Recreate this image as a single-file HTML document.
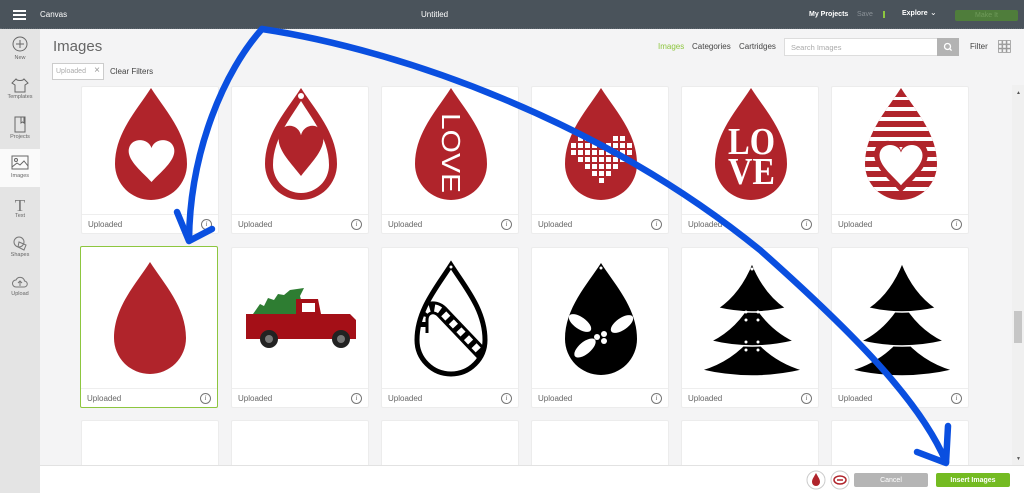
<!DOCTYPE html>
<html><head><meta charset="utf-8"><style>
*{margin:0;padding:0;box-sizing:border-box}
body{width:1024px;height:493px;overflow:hidden;background:#f4f4f5;font-family:"Liberation Sans",sans-serif;position:relative}
.abs{position:absolute}
#top{left:0;top:0;width:1024px;height:29px;background:#4a535b;border-bottom:1px dotted #5f6870}
#top span{position:absolute;color:#fff;font-size:8px;top:10px}
#side{left:0;top:29px;width:40px;height:464px;background:#e4e4e4}
.si{position:absolute;left:0;width:40px;text-align:center;font-size:5.5px;color:#666}
.card{position:absolute;width:138px;background:#fff;border:1px solid #ececec;border-radius:2px;overflow:hidden}
.card svg{display:block}
.ft{position:absolute;left:0;bottom:0;width:100%;height:19px;border-top:1px solid #eee}
.ft span{position:absolute;left:6px;top:5px;font-size:8px;color:#666}
.ft i{position:absolute;right:6px;top:4px;width:11px;height:11px;border:1px solid #777;border-radius:50%;font-size:7px;color:#666;text-align:center;line-height:9px;font-style:italic;font-family:"Liberation Serif",serif}
.btn{position:absolute;top:473px;width:74px;height:14px;border-radius:2px;color:#fff;font-size:7px;display:flex;align-items:center;justify-content:center}
</style></head><body>
<svg width="0" height="0" style="position:absolute"><defs>
<symbol id="drop" viewBox="0 0 72 112"><path d="M36 0C22 22 0 45 0 76A36 36 0 0 0 72 76C72 45 50 22 36 0Z"/></symbol>
<path id="heart" d="M50 22C44 2 12 0 6 22C0 45 30 68 50 90C70 68 100 45 94 22C88 0 56 2 50 22Z"/>
<clipPath id="dc"><path d="M69 1C55 23 33 46 33 77A36 36 0 0 0 105 77C105 46 83 23 69 1Z"/></clipPath>
<clipPath id="cc"><path d="M69 17C55 39 35 62 35 92A34 34 0 0 0 103 92C103 62 83 39 69 17Z"/></clipPath>
</defs></svg>

<div id="top" class="abs">
  <div class="abs" style="left:13px;top:10px;width:13px;height:2px;background:#fff;box-shadow:0 4px 0 #fff,0 8px 0 #fff"></div>
  <span style="left:40px">Canvas</span>
  <span style="left:421px">Untitled</span>
  <span style="left:809px;font-weight:bold;font-size:7px;top:11px">My Projects</span>
  <span style="left:857px;color:#8a9197;font-size:7px;top:11px">Save</span>
  <div class="abs" style="left:883px;top:11px;width:2px;height:7px;background:#8dc63f"></div>
  <span style="left:902px;font-weight:bold;font-size:7px;top:10px">Explore</span>
  <span style="left:930px;font-size:8px;top:8px">&#8964;</span>
  <div class="abs" style="left:955px;top:10px;width:63px;height:11px;background:#4f7d3b;border-radius:2px;color:#6f9a5a;font-size:7px;text-align:center;line-height:11px">Make It</div>
</div>

<div id="side" class="abs">
  <svg class="abs" style="left:12px;top:7px" width="16" height="16"><circle cx="8" cy="8" r="7" fill="none" stroke="#666"/><path d="M8 4v8M4 8h8" stroke="#666"/></svg>
  <div class="si" style="top:26px">New</div>
  <svg class="abs" style="left:11px;top:48px" width="18" height="16"><path d="M5 2L1 6l3 2v7h10V8l3-2-4-4c-1 2-7 2-8 0Z" fill="none" stroke="#666"/></svg>
  <div class="si" style="top:65px">Templates</div>
  <svg class="abs" style="left:13px;top:87px" width="14" height="17"><rect x="2" y="1" width="10" height="15" fill="none" stroke="#666"/><path d="M8 1v6l1.5-1 1.5 1V1" fill="none" stroke="#666"/></svg>
  <div class="si" style="top:105px">Projects</div>
  <div class="abs" style="left:0;top:120px;width:40px;height:38px;background:#fafafa"></div>
  <svg class="abs" style="left:11px;top:126px" width="18" height="15"><rect x="1" y="1" width="16" height="13" fill="none" stroke="#666"/><circle cx="5" cy="5" r="1.5" fill="none" stroke="#666"/><path d="M1 12l5-4 3 2 4-4 4 5" fill="none" stroke="#666"/></svg>
  <div class="si" style="top:144px">Images</div>
  <div class="si" style="top:167px;font-size:17px;font-family:'Liberation Serif',serif;color:#777">T</div>
  <div class="si" style="top:184px">Text</div>
  <svg class="abs" style="left:12px;top:206px" width="16" height="16"><circle cx="7" cy="7" r="5" fill="none" stroke="#777"/><path d="M7 7l7 3-2 5-6-3z" fill="none" stroke="#777"/></svg>
  <div class="si" style="top:223px">Shapes</div>
  <svg class="abs" style="left:12px;top:246px" width="16" height="14"><path d="M4 12a3.5 3.5 0 0 1 0-7 4.5 4.5 0 0 1 8.5 1A3 3 0 0 1 12 12Z" fill="none" stroke="#777"/><path d="M8 11V6M6 8l2-2 2 2" fill="none" stroke="#777"/></svg>
  <div class="si" style="top:262px">Upload</div>
</div>

<div class="abs" style="left:53px;top:38px;font-size:15px;color:#666">Images</div>
<div class="abs" style="left:52px;top:63px;width:52px;height:17px;border:1px solid #ccc;background:#fff;font-size:7px;color:#aaa;padding:4px 0 0 3px">Uploaded <span style="font-size:10px;position:absolute;right:3px;top:1px;color:#999">&#215;</span></div>
<div class="abs" style="left:110px;top:67px;font-size:8px;color:#444">Clear Filters</div>

<div class="abs" style="left:658px;top:42px;font-size:8px;color:#8dc63f">Images</div>
<div class="abs" style="left:692px;top:42px;font-size:8px;color:#444">Categories</div>
<div class="abs" style="left:739px;top:42px;font-size:8px;color:#444">Cartridges</div>
<div class="abs" style="left:784px;top:38px;width:154px;height:18px;background:#fff;border:1px solid #ddd;font-size:7.5px;color:#aaa;padding:4px 0 0 6px">Search Images</div>
<div class="abs" style="left:937px;top:38px;width:22px;height:18px;background:#b3b3b3"><svg width="22" height="18"><circle cx="10.5" cy="8.5" r="3" fill="none" stroke="#fff" stroke-width="1.3"/><path d="M12.6 10.6l2 2" stroke="#fff" stroke-width="1.3"/></svg></div>
<div class="abs" style="left:970px;top:42px;font-size:8px;color:#444">Filter</div>
<svg class="abs" style="left:998px;top:40px" width="13" height="13"><g fill="none" stroke="#999" stroke-width=".8"><rect x=".5" y=".5" width="3.5" height="3.5"/><rect x="4.7" y=".5" width="3.5" height="3.5"/><rect x="8.9" y=".5" width="3.5" height="3.5"/><rect x=".5" y="4.7" width="3.5" height="3.5"/><rect x="4.7" y="4.7" width="3.5" height="3.5"/><rect x="8.9" y="4.7" width="3.5" height="3.5"/><rect x=".5" y="8.9" width="3.5" height="3.5"/><rect x="4.7" y="8.9" width="3.5" height="3.5"/><rect x="8.9" y="8.9" width="3.5" height="3.5"/></g></svg>

<div class="abs" style="left:1012px;top:85px;width:12px;height:380px;background:#f0f0f0"></div>
<div class="abs" style="left:1016px;top:90px;font-size:5px;color:#555">&#9650;</div>
<div class="abs" style="left:1014px;top:311px;width:8px;height:32px;background:#c6c6c6"></div>
<div class="abs" style="left:1016px;top:456px;font-size:5px;color:#555">&#9660;</div>

<!-- ROW 1 -->
<div class="card" style="left:81px;top:86px;height:148px"><svg width="138" height="128" fill="#b0242b">
<use href="#drop" x="33" y="1" width="72" height="112"/><use href="#heart" transform="translate(44,50) scale(.51,.5)" fill="#fff"/></svg>
<div class="ft"><span>Uploaded</span><i>i</i></div></div>

<div class="card" style="left:231px;top:86px;height:148px"><svg width="138" height="128" fill="#b0242b">
<use href="#drop" x="33" y="1" width="72" height="112"/>
<path d="M69 14C58 32 41 52 41 78A28 28 0 0 0 97 78C97 52 80 32 69 14Z" fill="#fff"/>
<use href="#heart" transform="translate(44,35) scale(.5,.6)"/>
<circle cx="69" cy="9" r="3" fill="#fff"/></svg>
<div class="ft"><span>Uploaded</span><i>i</i></div></div>

<div class="card" style="left:381px;top:86px;height:148px"><svg width="138" height="128" fill="#b0242b">
<use href="#drop" x="33" y="1" width="72" height="112"/>
<text transform="translate(60,26) rotate(90)" font-family="Liberation Sans" font-size="26" fill="#fff" textLength="80" lengthAdjust="spacingAndGlyphs">LOVE</text></svg>
<div class="ft"><span>Uploaded</span><i>i</i></div></div>

<div class="card" style="left:531px;top:86px;height:148px"><svg width="138" height="128" fill="#b0242b">
<use href="#drop" x="33" y="1" width="72" height="112"/>
<g fill="#fff">
<rect x="46" y="49" width="5" height="5"/><rect x="53" y="49" width="5" height="5"/><rect x="81" y="49" width="5" height="5"/><rect x="88" y="49" width="5" height="5"/>
<rect x="39" y="56" width="5" height="5"/><rect x="46" y="56" width="5" height="5"/><rect x="53" y="56" width="5" height="5"/><rect x="60" y="56" width="5" height="5"/><rect x="74" y="56" width="5" height="5"/><rect x="81" y="56" width="5" height="5"/><rect x="88" y="56" width="5" height="5"/><rect x="95" y="56" width="5" height="5"/>
<rect x="39" y="63" width="5" height="5"/><rect x="46" y="63" width="5" height="5"/><rect x="53" y="63" width="5" height="5"/><rect x="60" y="63" width="5" height="5"/><rect x="67" y="63" width="5" height="5"/><rect x="74" y="63" width="5" height="5"/><rect x="81" y="63" width="5" height="5"/><rect x="88" y="63" width="5" height="5"/><rect x="95" y="63" width="5" height="5"/>
<rect x="46" y="70" width="5" height="5"/><rect x="53" y="70" width="5" height="5"/><rect x="60" y="70" width="5" height="5"/><rect x="67" y="70" width="5" height="5"/><rect x="74" y="70" width="5" height="5"/><rect x="81" y="70" width="5" height="5"/><rect x="88" y="70" width="5" height="5"/>
<rect x="53" y="77" width="5" height="5"/><rect x="60" y="77" width="5" height="5"/><rect x="67" y="77" width="5" height="5"/><rect x="74" y="77" width="5" height="5"/><rect x="81" y="77" width="5" height="5"/>
<rect x="60" y="84" width="5" height="5"/><rect x="67" y="84" width="5" height="5"/><rect x="74" y="84" width="5" height="5"/>
<rect x="67" y="91" width="5" height="5"/></g></svg>
<div class="ft"><span>Uploaded</span><i>i</i></div></div>

<div class="card" style="left:681px;top:86px;height:148px"><svg width="138" height="128" fill="#b0242b">
<use href="#drop" x="33" y="1" width="72" height="112"/>
<g fill="#fff" font-family="Liberation Serif" font-weight="bold" font-size="38">
<text x="46" y="67" textLength="47" lengthAdjust="spacingAndGlyphs">LO</text>
<text x="46" y="97" textLength="47" lengthAdjust="spacingAndGlyphs">VE</text></g></svg>
<div class="ft"><span>Uploaded</span><i>i</i></div></div>

<div class="card" style="left:831px;top:86px;height:148px"><svg width="138" height="128" fill="#b0242b">
<use href="#drop" x="33" y="1" width="72" height="112"/>
<g clip-path="url(#dc)" fill="#fff"><rect x="60" y="10" width="18" height="3"/><rect x="0" y="20" width="138" height="4"/><rect x="0" y="30" width="138" height="4"/><rect x="0" y="40" width="138" height="4"/><rect x="0" y="50" width="138" height="4"/><rect x="0" y="60" width="138" height="4"/><rect x="0" y="70" width="138" height="4"/><rect x="0" y="80" width="138" height="4"/><rect x="0" y="90" width="138" height="4"/><rect x="0" y="100" width="138" height="4"/></g>
<use href="#heart" transform="translate(39,50) scale(.6,.62)"/>
<use href="#heart" transform="translate(45,55) scale(.48,.48)" fill="#fff"/></svg>
<div class="ft"><span>Uploaded</span><i>i</i></div></div>

<!-- ROW 2 -->
<div class="card" style="left:80px;top:246px;height:162px;border:1.5px solid #8dc63f"><svg width="138" height="141" fill="#b0242b">
<use href="#drop" x="33" y="15" width="72" height="112"/></svg>
<div class="ft"><span>Uploaded</span><i>i</i></div></div>

<div class="card" style="left:231px;top:247px;height:161px"><svg width="138" height="141">
<path d="M21 66L28 56 32 58 36 50 42 52 46 46 52 47 58 42 65 41 72 40 68 48 70 55 64 60 68 66Z" fill="#2e7d32"/>
<path d="M14 66H64V51H86L89 66 118 66 124 72V91H14Z" fill="#a40f17"/>
<rect x="70" y="55" width="13" height="9" fill="#fff"/>
<circle cx="37" cy="91" r="9" fill="#222"/><circle cx="37" cy="91" r="4" fill="#777"/>
<circle cx="109" cy="91" r="9" fill="#222"/><circle cx="109" cy="91" r="4" fill="#777"/></svg>
<div class="ft"><span>Uploaded</span><i>i</i></div></div>

<div class="card" style="left:381px;top:247px;height:161px"><svg width="138" height="141">
<g clip-path="url(#cc)">
<path d="M40 85V72C40 60 52 56 60 64L100 106" fill="none" stroke="#000" stroke-width="13"/>
<path d="M40 85V72C40 60 52 56 60 64L100 106" fill="none" stroke="#fff" stroke-width="7" stroke-dasharray="6 5"/></g>
<path d="M69 17C55 39 35 62 35 92A34 34 0 0 0 103 92C103 62 83 39 69 17Z" fill="none" stroke="#000" stroke-width="5"/>
<circle cx="69" cy="19" r="1.5" fill="#fff"/></svg>
<div class="ft"><span>Uploaded</span><i>i</i></div></div>

<div class="card" style="left:531px;top:247px;height:161px"><svg width="138" height="141">
<use href="#drop" x="33" y="15" width="72" height="112" fill="#000"/>
<circle cx="69" cy="20" r="1.5" fill="#fff"/>
<g fill="#fff"><ellipse cx="48" cy="75" rx="13" ry="6" transform="rotate(35 48 75)"/><ellipse cx="90" cy="76" rx="13" ry="6" transform="rotate(-35 90 76)"/><ellipse cx="53" cy="100" rx="13" ry="6" transform="rotate(-40 53 100)"/>
<circle cx="65" cy="89" r="3"/><circle cx="72" cy="86" r="3"/><circle cx="72" cy="93" r="3"/></g></svg>
<div class="ft"><span>Uploaded</span><i>i</i></div></div>

<div class="card" style="left:681px;top:247px;height:161px"><svg width="138" height="141">
<g fill="#000" stroke="#fff" stroke-width="1.5">
<path d="M70 88Q50 113 19 122Q70 134 121 122Q90 113 70 88Z"/>
<path d="M70 52Q55 80 29 93Q70 103 112 93Q85 80 70 52Z"/>
<path d="M70 15Q58 45 36 60Q70 68 104 60Q82 45 70 15Z"/></g>
<g fill="#fff"><circle cx="70" cy="21" r="1.5"/><circle cx="64" cy="64" r="1.5"/><circle cx="76" cy="64" r="1.5"/><circle cx="64" cy="72" r="1.5"/><circle cx="76" cy="72" r="1.5"/><circle cx="64" cy="94" r="1.5"/><circle cx="76" cy="94" r="1.5"/><circle cx="64" cy="102" r="1.5"/><circle cx="76" cy="102" r="1.5"/></g></svg>
<div class="ft"><span>Uploaded</span><i>i</i></div></div>

<div class="card" style="left:831px;top:247px;height:161px"><svg width="138" height="141">
<g fill="#000" stroke="#fff" stroke-width="1.5">
<path d="M70 88Q50 113 19 122Q70 134 121 122Q90 113 70 88Z"/>
<path d="M70 52Q55 80 29 93Q70 103 112 93Q85 80 70 52Z"/>
<path d="M70 15Q58 45 36 60Q70 68 104 60Q82 45 70 15Z"/></g></svg>
<div class="ft"><span>Uploaded</span><i>i</i></div></div>

<!-- ROW 3 -->
<div class="card" style="left:81px;top:420px;height:60px"></div>
<div class="card" style="left:231px;top:420px;height:60px"></div>
<div class="card" style="left:381px;top:420px;height:60px"></div>
<div class="card" style="left:531px;top:420px;height:60px"></div>
<div class="card" style="left:681px;top:420px;height:60px"></div>
<div class="card" style="left:831px;top:420px;height:60px"></div>

<div class="abs" style="left:40px;top:465px;width:984px;height:28px;background:#fff;border-top:1px solid #e2e2e2"></div>
<svg class="abs" style="left:806px;top:470px" width="48" height="20"><circle cx="10" cy="10" r="9" fill="#fff" stroke="#ccc"/><path d="M10 3C8 7 6 9 6 12A4 4 0 0 0 14 12C14 9 12 7 10 3Z" fill="#b0242b"/><circle cx="34" cy="10" r="9" fill="#fff" stroke="#ccc"/><ellipse cx="34" cy="10" rx="6" ry="4" fill="none" stroke="#b0242b" stroke-width="1.5"/><path d="M31 10h6" stroke="#b0242b" stroke-width="1.5"/></svg>
<div class="btn" style="left:854px;background:#b5b5b5">Cancel</div>
<div class="btn" style="left:936px;background:#74bb22;font-weight:bold">Insert Images</div>

<svg class="abs" style="left:0;top:0" width="1024" height="493" fill="none" stroke="#0a4fe0" stroke-width="6.5" stroke-linecap="round" stroke-linejoin="round">
<path d="M262 29C225 70 190 150 189 240"/>
<path d="M177 212L189 241 212 229"/>
<path d="M262 29C400 50 600 120 760 250C850 330 920 400 946 462"/>
<path d="M917 452L946 463 948 426"/>
</svg>
</body></html>
